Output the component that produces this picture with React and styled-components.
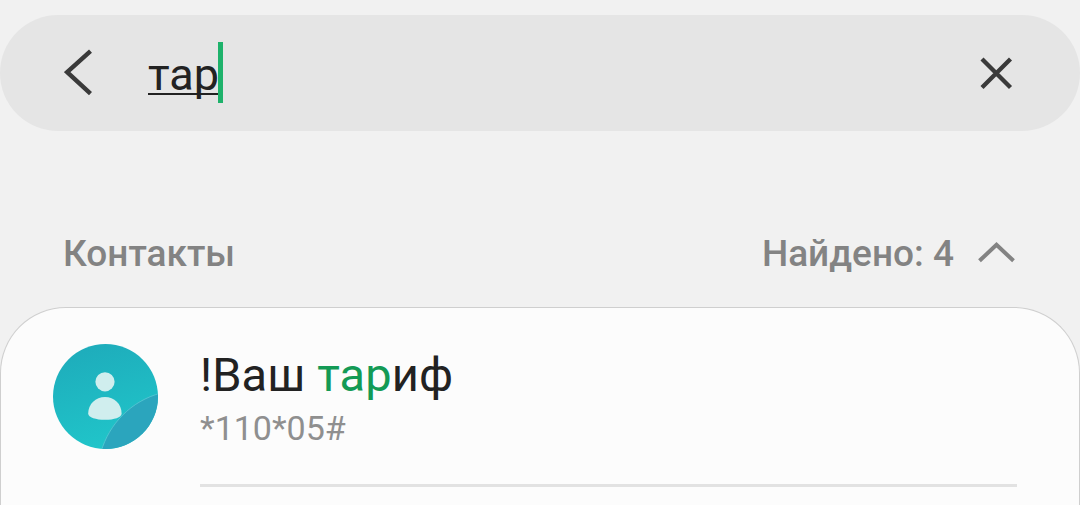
import styled, { createGlobalStyle } from "styled-components"

const GlobalStyle = createGlobalStyle`
    * {
        box-sizing: border-box;
    }

    body {
        margin: 0;
        background-color: #f1f1f1;
        font-family: Roboto, "Liberation Sans", sans-serif;
    }
`

const Container = styled.div`
    height: 505px;
    padding-top: 15px;
    display: flex;
    flex-direction: column;
    overflow: hidden;
`

const SearchBar = styled.div`
    height: 116px;
    flex-shrink: 0;
    padding: 0 64px;
    border-radius: 58px;
    background-color: #e5e5e5;
    display: flex;
    align-items: center;
`

const IconButton = styled.button`
    padding: 0;
    border: none;
    background: none;
    color: ${(props) => props.$color || "#3a3a3a"};
    display: flex;
    cursor: pointer;
`

const Query = styled.div`
    flex: 1;
    height: 61px;
    margin: 0 0 1px 55px;
    display: flex;
`

const QueryText = styled.span`
    height: 61px;
    padding-top: 2px;
    line-height: 61px;
    font-size: 45px;
    color: #222222;
    text-decoration: underline;
    text-decoration-thickness: 2px;
    text-underline-offset: 3px;
    text-decoration-skip-ink: none;
`

const Caret = styled.span`
    width: 5px;
    height: 61px;
    margin-left: -1px;
    background-color: #1eb26b;
`

const SectionHeader = styled.div`
    height: 54px;
    flex-shrink: 0;
    margin-top: 96px;
    padding: 0 65px 0 63px;
    display: flex;
    align-items: center;
    color: #838383;
    font-size: 37px;
    font-weight: 500;
    line-height: 54px;
`

const SectionTitle = styled.span`
    flex: 1;
`

const Found = styled.span`
    margin-right: 24px;
`

const Card = styled.div`
    flex: 1;
    margin-top: 26px;
    padding: 36px 62px 0 52px;
    border: 1px solid #cfcfcf;
    border-bottom: none;
    border-radius: 66px 66px 0 0;
    background-color: #fcfcfc;
`

const Contact = styled.div`
    display: flex;
    align-items: flex-start;
`

const Info = styled.div`
    flex: 1;
    height: 143px;
    margin-left: 42px;
    border-bottom: 3px solid #e2e2e2;
`

const Name = styled.div`
    height: 62px;
    line-height: 62px;
    font-size: 47px;
    letter-spacing: 0.1px;
    color: #222222;
    white-space: pre;
`

const Match = styled.span`
    color: #139a55;
`

const Phone = styled.div`
    height: 44px;
    line-height: 44px;
    font-size: 34px;
    color: #8f8f8f;
`

const Avatar = () => (
    <svg width="105" height="105" viewBox="0 0 105 105">
        <defs>
            <linearGradient id="avatarFill" x1="0.3" y1="0" x2="0.6" y2="1">
                <stop offset="0" stopColor="#1eacbb" />
                <stop offset="1" stopColor="#20c6ca" />
            </linearGradient>
            <clipPath id="avatarClip">
                <circle cx="52.5" cy="52.5" r="52.5" />
            </clipPath>
        </defs>
        <g clipPath="url(#avatarClip)">
            <rect width="105" height="105" fill="url(#avatarFill)" />
            <path d="M48 108C56 80 78 57 108 49V108Z" fill="#2ba5bd" stroke="#5cc9d4" strokeWidth="0.8" />
        </g>
        <circle cx="52" cy="37.8" r="9.6" fill="#d0eeee" />
        <path d="M35.2 69.5C35.2 60 42.7 53 52 53S68.6 60 68.6 69.5C68.6 73.5 61 75.8 52 75.8S35.2 73.5 35.2 69.5Z" fill="#d0eeee" />
    </svg>
)

const App = () => {
    return (
        <>
            <GlobalStyle />
            <Container>
                <SearchBar>
                    <IconButton aria-label="Назад">
                        <svg width="29" height="48" viewBox="0 0 29 48" fill="none" stroke="currentColor" strokeWidth="4.4">
                            <path d="M26.5 2.2L3.2 23.2L26.5 44.6" />
                        </svg>
                    </IconButton>
                    <Query>
                        <QueryText>тар</QueryText>
                        <Caret />
                    </Query>
                    <IconButton aria-label="Очистить">
                        <svg width="39" height="34" viewBox="0 0 39 34" fill="none" stroke="currentColor" strokeWidth="4.3">
                            <path d="M5 3L33.5 31.5M33.5 3L5 31.5" />
                        </svg>
                    </IconButton>
                </SearchBar>
                <SectionHeader>
                    <SectionTitle>Контакты</SectionTitle>
                    <Found>Найдено: 4</Found>
                    <IconButton $color="#838383" aria-label="Свернуть">
                        <svg width="37" height="24" viewBox="0 0 37 24" fill="none" stroke="currentColor" strokeWidth="4">
                            <path d="M1.5 18.8L18.5 2.8L35.5 18.8" />
                        </svg>
                    </IconButton>
                </SectionHeader>
                <Card>
                    <Contact>
                        <Avatar />
                        <Info>
                            <Name>!Ваш <Match>тар</Match>иф</Name>
                            <Phone>*110*05#</Phone>
                        </Info>
                    </Contact>
                </Card>
            </Container>
        </>
    )
}

export default App
